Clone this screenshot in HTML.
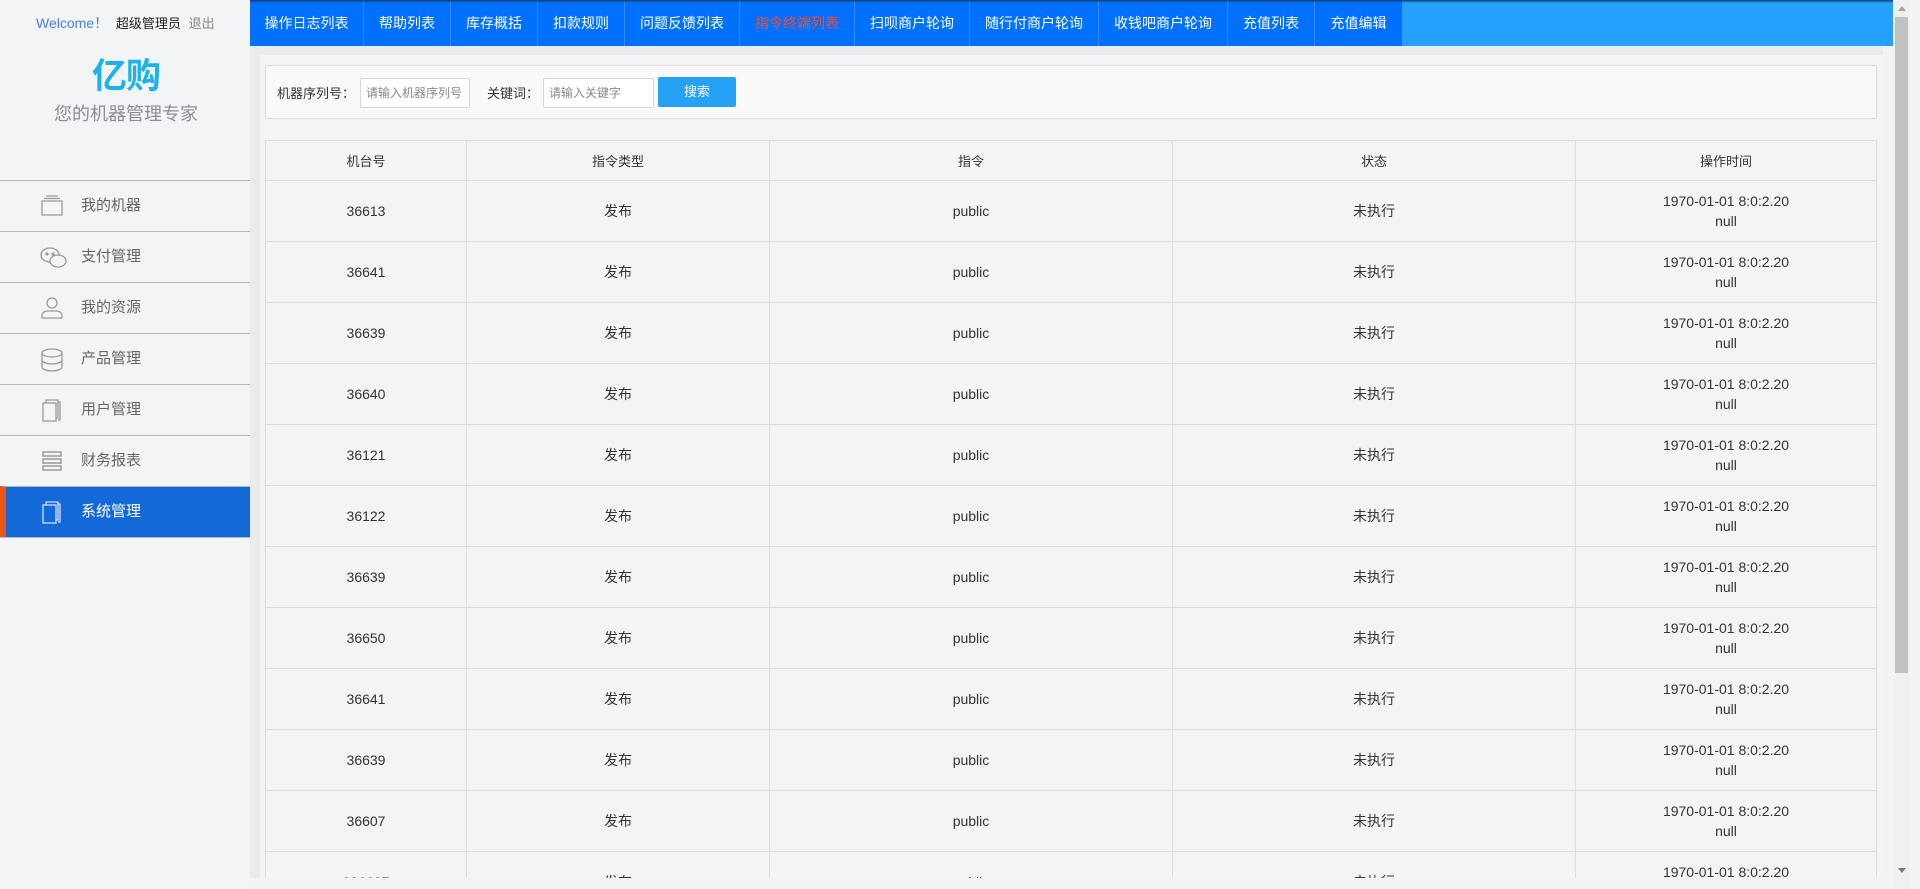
<!DOCTYPE html>
<html><head><meta charset="utf-8"><style>
*{margin:0;padding:0;box-sizing:border-box}
body{width:1920px;height:889px;overflow:hidden;background:#f2f3f5;font-family:"Liberation Sans","Noto Sans CJK SC",sans-serif;position:relative}
#side{position:absolute;left:0;top:0;width:250px;height:889px;background:#f3f4f6}
.wel{position:absolute;top:13px;left:36px;font-size:14px;white-space:nowrap}
.logo{position:absolute;top:48px;left:0;width:252px;text-align:center;font-size:35px;font-weight:bold;color:#1cb3ea;letter-spacing:-1px}
.sub{position:absolute;top:100px;left:0;width:252px;text-align:center;font-size:18px;color:#8a8e94}
.menu{position:absolute;top:180px;left:0;width:250px}
.mi{height:51px;border-top:1px solid #b4b6b9;position:relative;font-size:15px;color:#666;line-height:50px;padding-left:81px}
.mi svg{position:absolute;left:40px;top:14px}
.mi.act{background:#1469d9;color:#fff;border-left:6px solid #ea5513;padding-left:75px}
.mi.act svg{left:34px}
#top{position:absolute;left:250px;top:0;width:1643px;height:46px;background:#26a0fd}
#top .dk{position:absolute;left:0;top:0;height:46px;display:flex;background:#0070ff}
#top .dk div{color:#fff;font-size:14px;line-height:46px;text-align:center;border-right:1px solid #3a8cf3}
#top:before{content:"";position:absolute;left:0;right:0;top:0;height:3px;background:linear-gradient(#1a3a70,transparent);z-index:2}
#main{position:absolute;left:250px;top:46px;width:1633px;height:843px;background:#ebebeb}
#panel{position:absolute;left:10px;top:9px;width:1623px;height:823px;background:#f3f4f6;overflow:hidden}
.sbox{position:absolute;left:5px;top:10px;width:1612px;height:54px;background:#f9f9f9;border:1px solid #dcdcdc;border-radius:2px;font-size:13px;color:#333}
.sbox span{position:absolute;top:17px}
.inp{position:absolute;top:12px;height:30px;border:1px solid #d8d8d8;background:#fff;border-radius:2px;font-size:12px;color:#888;line-height:28px;padding-left:5px;overflow:hidden;white-space:nowrap}
.btn{position:absolute;left:392px;top:11px;width:78px;height:30px;background:#25a2f5;border-radius:2px;color:#fff;text-align:center;line-height:30px;font-size:13px}
table{position:absolute;left:5px;top:85px;width:1612px;border-collapse:collapse;font-size:14px;color:#333;table-layout:fixed}
td,th{border:1px solid #dcdcdc;text-align:center;font-weight:normal}
th{height:40px;font-size:13px}
td{height:61px;line-height:20px}
#sb{position:absolute;left:1893px;top:0;width:17px;height:889px;background:#f0f0f0}
#sb .th{position:absolute;left:2px;top:17px;width:13px;height:656px;background:#c1c1c1}
</style></head><body>
<div id="side">
<div class="wel"><span style="color:#4a80e0">Welcome！</span>&nbsp;&nbsp;<span style="color:#222;font-size:13px">超级管理员</span>&nbsp;&nbsp;<span style="color:#888;font-size:13px">退出</span></div>
<div class="logo">亿购</div>
<div class="sub">您的机器管理专家</div>
<div class="menu">
<div class="mi"><svg width="24" height="22" fill="none" stroke="#999" stroke-width="1.3"><rect x="2" y="6" width="20" height="14"/><path d="M4 3.5h16M6 1h12"/></svg>我的机器</div>
<div class="mi"><svg width="28" height="24" fill="none" stroke="#999" stroke-width="1.3"><ellipse cx="10" cy="9" rx="9" ry="7"/><ellipse cx="18" cy="15" rx="8" ry="6" fill="#f3f4f6"/><circle cx="7" cy="8" r="1" fill="#999"/><circle cx="13" cy="8" r="1" fill="#999"/></svg>支付管理</div>
<div class="mi"><svg width="24" height="22" fill="none" stroke="#999" stroke-width="1.3"><circle cx="12" cy="6" r="5"/><path d="M2 21v-2a5 5 0 0 1 5-5h10a5 5 0 0 1 5 5v2z"/></svg>我的资源</div>
<div class="mi"><svg width="24" height="24" fill="none" stroke="#999" stroke-width="1.3"><ellipse cx="12" cy="5" rx="10" ry="4"/><path d="M2 5v14c0 2 4.5 4 10 4s10-2 10-4V5M2 12c0 2 4.5 4 10 4s10-2 10-4"/></svg>产品管理</div>
<div class="mi"><svg width="24" height="24" fill="none" stroke="#999" stroke-width="1.3"><rect x="3" y="4" width="13" height="18"/><path d="M6 4V1h12v18h-2M18 3h2v18h-2"/></svg>用户管理</div>
<div class="mi"><svg width="24" height="22" fill="none" stroke="#999" stroke-width="1.5"><rect x="3" y="2" width="18" height="4"/><rect x="3" y="9" width="18" height="4"/><rect x="3" y="16" width="18" height="4"/></svg>财务报表</div>
<div class="mi act"><svg width="24" height="24" fill="none" stroke="#cfe0f8" stroke-width="1.3"><rect x="3" y="4" width="13" height="18"/><path d="M6 4V1h12v18h-2M18 3h2v18h-2"/></svg>系统管理</div>
<div style="border-top:1px solid #b4b6b9"></div>
</div>
</div>
<div id="top"><div class="dk">
<div style="width:114px">操作日志列表</div><div style="width:87px">帮助列表</div><div style="width:87px">库存概括</div><div style="width:87px">扣款规则</div><div style="width:115px">问题反馈列表</div><div style="width:115px;color:#ff4a2a">指令终端列表</div><div style="width:115px">扫呗商户轮询</div><div style="width:129px">随行付商户轮询</div><div style="width:129px">收钱吧商户轮询</div><div style="width:87px">充值列表</div><div style="width:87px;border-right:none">充值编辑</div>
</div></div>
<div id="main"><div id="panel">
<div class="sbox"><span style="left:11px">机器序列号：</span><div class="inp" style="left:94px;width:110px">请输入机器序列号</div><span style="left:221px">关键词：</span><div class="inp" style="left:277px;width:111px">请输入关键字</div><div class="btn">搜索</div></div>
<table>
<colgroup><col style="width:201px"><col style="width:303px"><col style="width:403px"><col style="width:403px"><col></colgroup>
<tr><th>机台号</th><th>指令类型</th><th>指令</th><th>状态</th><th>操作时间</th></tr>
<tr><td>36613</td><td>发布</td><td>public</td><td>未执行</td><td>1970-01-01 8:0:2.20<br>null</td></tr>
<tr><td>36641</td><td>发布</td><td>public</td><td>未执行</td><td>1970-01-01 8:0:2.20<br>null</td></tr>
<tr><td>36639</td><td>发布</td><td>public</td><td>未执行</td><td>1970-01-01 8:0:2.20<br>null</td></tr>
<tr><td>36640</td><td>发布</td><td>public</td><td>未执行</td><td>1970-01-01 8:0:2.20<br>null</td></tr>
<tr><td>36121</td><td>发布</td><td>public</td><td>未执行</td><td>1970-01-01 8:0:2.20<br>null</td></tr>
<tr><td>36122</td><td>发布</td><td>public</td><td>未执行</td><td>1970-01-01 8:0:2.20<br>null</td></tr>
<tr><td>36639</td><td>发布</td><td>public</td><td>未执行</td><td>1970-01-01 8:0:2.20<br>null</td></tr>
<tr><td>36650</td><td>发布</td><td>public</td><td>未执行</td><td>1970-01-01 8:0:2.20<br>null</td></tr>
<tr><td>36641</td><td>发布</td><td>public</td><td>未执行</td><td>1970-01-01 8:0:2.20<br>null</td></tr>
<tr><td>36639</td><td>发布</td><td>public</td><td>未执行</td><td>1970-01-01 8:0:2.20<br>null</td></tr>
<tr><td>36607</td><td>发布</td><td>public</td><td>未执行</td><td>1970-01-01 8:0:2.20<br>null</td></tr>
<tr><td>036637</td><td>发布</td><td>public</td><td>未执行</td><td>1970-01-01 8:0:2.20<br>null</td></tr>
</table>
</div></div>
<div style="position:absolute;left:250px;top:878px;width:1643px;height:11px;background:#f2f3f5"></div>
<div id="sb"><div class="th"></div><div style="position:absolute;left:5px;top:6px;border:4px solid transparent;border-bottom:5px solid #a3a3a3;border-top:none"></div><div style="position:absolute;left:5px;top:868px;border:4px solid transparent;border-top:5px solid #777;border-bottom:none"></div></div>
</body></html>
